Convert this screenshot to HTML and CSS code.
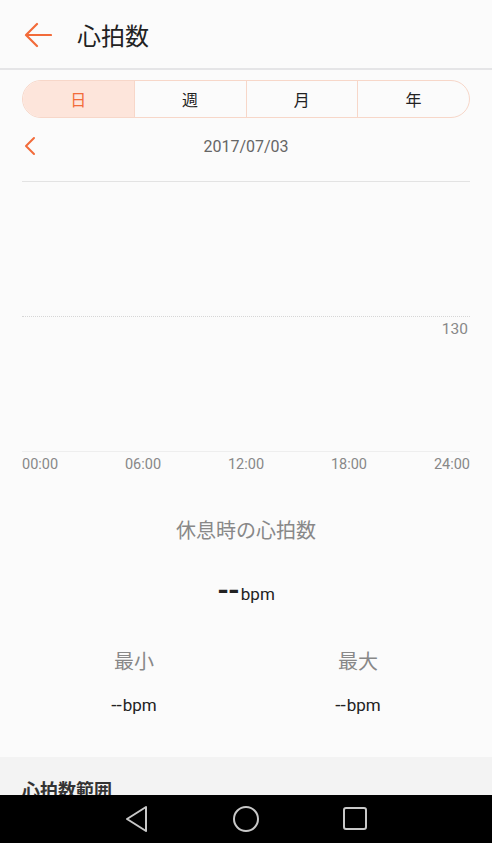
FILE: index.html
```html
<!DOCTYPE html>
<html lang="ja">
<head>
  <meta charset="utf-8">
  <meta name="viewport" content="width=device-width, initial-scale=1.0">
  <title>心拍数</title>
  <link rel="stylesheet" href="styles.css">
</head>
<body>
<div class="header">
  <svg class="back" width="28" height="26" viewBox="0 0 28 26"><path d="M27 13H3M13 2L2 13L13 24" fill="none" stroke="#f26b3a" stroke-width="2.2" stroke-linecap="round" stroke-linejoin="round"/></svg>
  <h1>心拍数</h1>
</div>

<div class="tabs">
  <div class="tab on">日</div>
  <div class="tab">週</div>
  <div class="tab">月</div>
  <div class="tab">年</div>
</div>

<div class="date-row">
  <svg class="prev" width="14" height="20" viewBox="0 0 14 20"><path d="M11 2L3 10L11 18" fill="none" stroke="#f26b3a" stroke-width="2" stroke-linecap="round" stroke-linejoin="round"/></svg>
  <span class="date">2017/07/03</span>
</div>

<div class="chart">
  <div class="upper"></div>
  <div class="lower"><span class="ylabel">130</span></div>
</div>
<div class="axis">
  <span>00:00</span><span>06:00</span><span>12:00</span><span>18:00</span><span>24:00</span>
</div>

<div class="rest">
  <h2>休息時の心拍数</h2>
  <div class="rest-val"><b>--</b>bpm</div>
</div>

<div class="minmax">
  <div class="col">
    <h3>最小</h3>
    <div class="val"><span class="dash">--</span>bpm</div>
  </div>
  <div class="col">
    <h3>最大</h3>
    <div class="val"><span class="dash">--</span>bpm</div>
  </div>
</div>

<div class="range">
  <h4>心拍数範囲</h4>
</div>

<div class="navbar">
  <svg width="26" height="28" viewBox="0 0 26 28"><path d="M22 2L3 14L22 26Z" fill="none" stroke="#c8c8c8" stroke-width="2" stroke-linejoin="round"/></svg>
  <svg width="28" height="28" viewBox="0 0 28 28"><circle cx="14" cy="14" r="12" fill="none" stroke="#c8c8c8" stroke-width="2"/></svg>
  <svg width="26" height="26" viewBox="0 0 26 26"><rect x="2" y="2" width="22" height="21" rx="2" fill="none" stroke="#c8c8c8" stroke-width="2"/></svg>
</div>
</body>
</html>
```

FILE: styles.css
```css
html,body{margin: 0;padding: 0;}
body{background: #fbfbfb;font-family: Roboto, "Noto Sans CJK JP", sans-serif;color: #222;overflow: hidden;height: 843px;}
h1,h2,h3,h4{margin: 0;padding: 0;font-weight: normal;}

.header{height: 68px;display: flex;align-items: center;border-bottom: 2px solid #e5e5e7;}
.header .back{margin-left: 24px;margin-top: 1px;}
.header h1{margin-left: 25px;font-size: 24px;color: #222;}

.tabs{display: flex;margin: 10px 22px 0;height: 36px;border: 1px solid #f7d7c9;border-radius: 19px;overflow: hidden;}
.tab{flex: 1;display: flex;align-items: center;justify-content: center;font-size: 16px;color: #222;border-left: 1px solid #f7d7c9;}
.tab:first-child{border-left: 0;}
.tab.on{background: #fde5db;color: #f26b3a;}

.date-row{position: relative;display: flex;align-items: center;justify-content: center;margin-top: 10px;height: 36px;}
.date-row .prev{position: absolute;left: 23px;top: 8px;}
.date{font-size: 16px;color: #666;}

.chart{margin: 17px 22px 0;border-top: 1px solid #e3e3e3;border-bottom: 1px solid #eeeeee;}
.upper{height: 134px;border-bottom: 1px dotted #d6d6d6;}
.lower{height: 134px;text-align: right;}
.ylabel{display: inline-block;margin-top: 3px;margin-right: 2px;font-size: 15.5px;color: #888;}

.axis{display: flex;justify-content: space-between;margin: 3px 22px 0;font-size: 14.5px;line-height: 20px;color: #888;}

.rest{text-align: center;margin-top: 42px;}
.rest h2{font-size: 20px;line-height: 28px;color: #888;}
.rest-val{margin-top: 31px;font-size: 17px;color: #222;line-height: 28px;}
.rest-val b{font-size: 30px;font-weight: bold;letter-spacing: -1px;margin-right: 2px;}

.minmax{display: flex;margin: 40px 22px 0;}
.col{flex: 1;text-align: center;}
.col h3{font-size: 20px;line-height: 28px;color: #888;}
.col .val{margin-top: 19px;font-size: 17px;line-height: 20px;color: #222;}
.col .dash{font-size: 19px;letter-spacing: 0;margin-right: 1px;}

.range{margin-top: 42px;background: #f3f3f3;height: 120px;padding: 0 22px;}
.range h4{padding-top: 19px;font-size: 18px;color: #333;font-weight: bold;}

.navbar{position: fixed;left: 0;right: 0;bottom: 0;height: 48px;background: #000;display: flex;align-items: center;justify-content: center;gap: 82px;}
```
